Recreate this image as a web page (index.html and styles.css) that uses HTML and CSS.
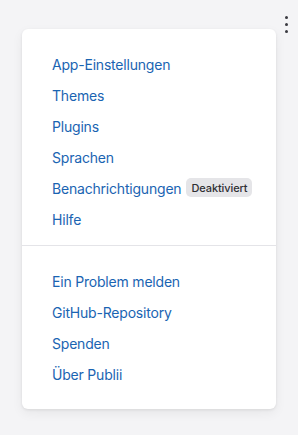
FILE: index.html
```html
<!DOCTYPE html>
<html lang="de">
<head>
<meta charset="utf-8">
<title>Menü</title>
<link rel="stylesheet" href="styles.css">
</head>
<body>
<div class="page">
  <button class="more" aria-label="Mehr">
    <span class="dot"></span><span class="dot"></span><span class="dot"></span>
  </button>
  <nav class="menu">
    <ul class="group group-top">
      <li><a href="#">App-Einstellungen</a></li>
      <li><a href="#">Themes</a></li>
      <li><a href="#">Plugins</a></li>
      <li><a href="#">Sprachen</a></li>
      <li><a href="#">Benachrichtigungen</a><span class="badge">Deaktiviert</span></li>
      <li><a href="#">Hilfe</a></li>
    </ul>
    <ul class="group group-bottom">
      <li><a href="#">Ein Problem melden</a></li>
      <li><a href="#">GitHub-Repository</a></li>
      <li><a href="#">Spenden</a></li>
      <li><a href="#">Über Publii</a></li>
    </ul>
  </nav>
</div>
</body>
</html>
```

FILE: styles.css
```css
html, body {
  margin: 0;
  padding: 0;
  background: #f4f4f6;
  font-family: Inter, "Noto Sans", sans-serif;
}

.page {
  position: relative;
  width: 298px;
  height: 435px;
  padding: 29px 0 0 22px;
  box-sizing: border-box;
}

.more {
  position: absolute;
  top: 16px;
  left: 283px;
  width: 6px;
  height: 17px;
  padding: 0;
  border: 0;
  background: transparent;
  display: flex;
  flex-direction: column;
  align-items: center;
  justify-content: space-between;
}

.dot {
  width: 3px;
  height: 3px;
  border-radius: 50%;
  background: #3a3a40;
}

.menu {
  width: 254px;
  background: #ffffff;
  border-radius: 6px;
  box-shadow: 0 1px 3px rgba(0, 0, 0, 0.08), 0 4px 12px rgba(0, 0, 0, 0.06);
}

.group {
  list-style: none;
  margin: 0;
  padding: 20px 0 10px 30px;
}

.group-bottom {
  border-top: 1px solid #e4e4e8;
  padding: 20px 0 19px 30px;
}

.group li {
  height: 31px;
  display: flex;
  align-items: center;
}

.group a {
  font-size: 14px;
  line-height: 31px;
  letter-spacing: -0.2px;
  color: #1a64b2;
  text-decoration: none;
}

.badge {
  margin-left: 5px;
  height: 19px;
  padding: 0 5px;
  display: inline-flex;
  align-items: center;
  border-radius: 5px;
  background: #e5e5e8;
  color: #2f2f33;
  font-size: 11px;
  font-weight: 500;
  letter-spacing: -0.1px;
  position: relative;
  top: -1px;
}
```
